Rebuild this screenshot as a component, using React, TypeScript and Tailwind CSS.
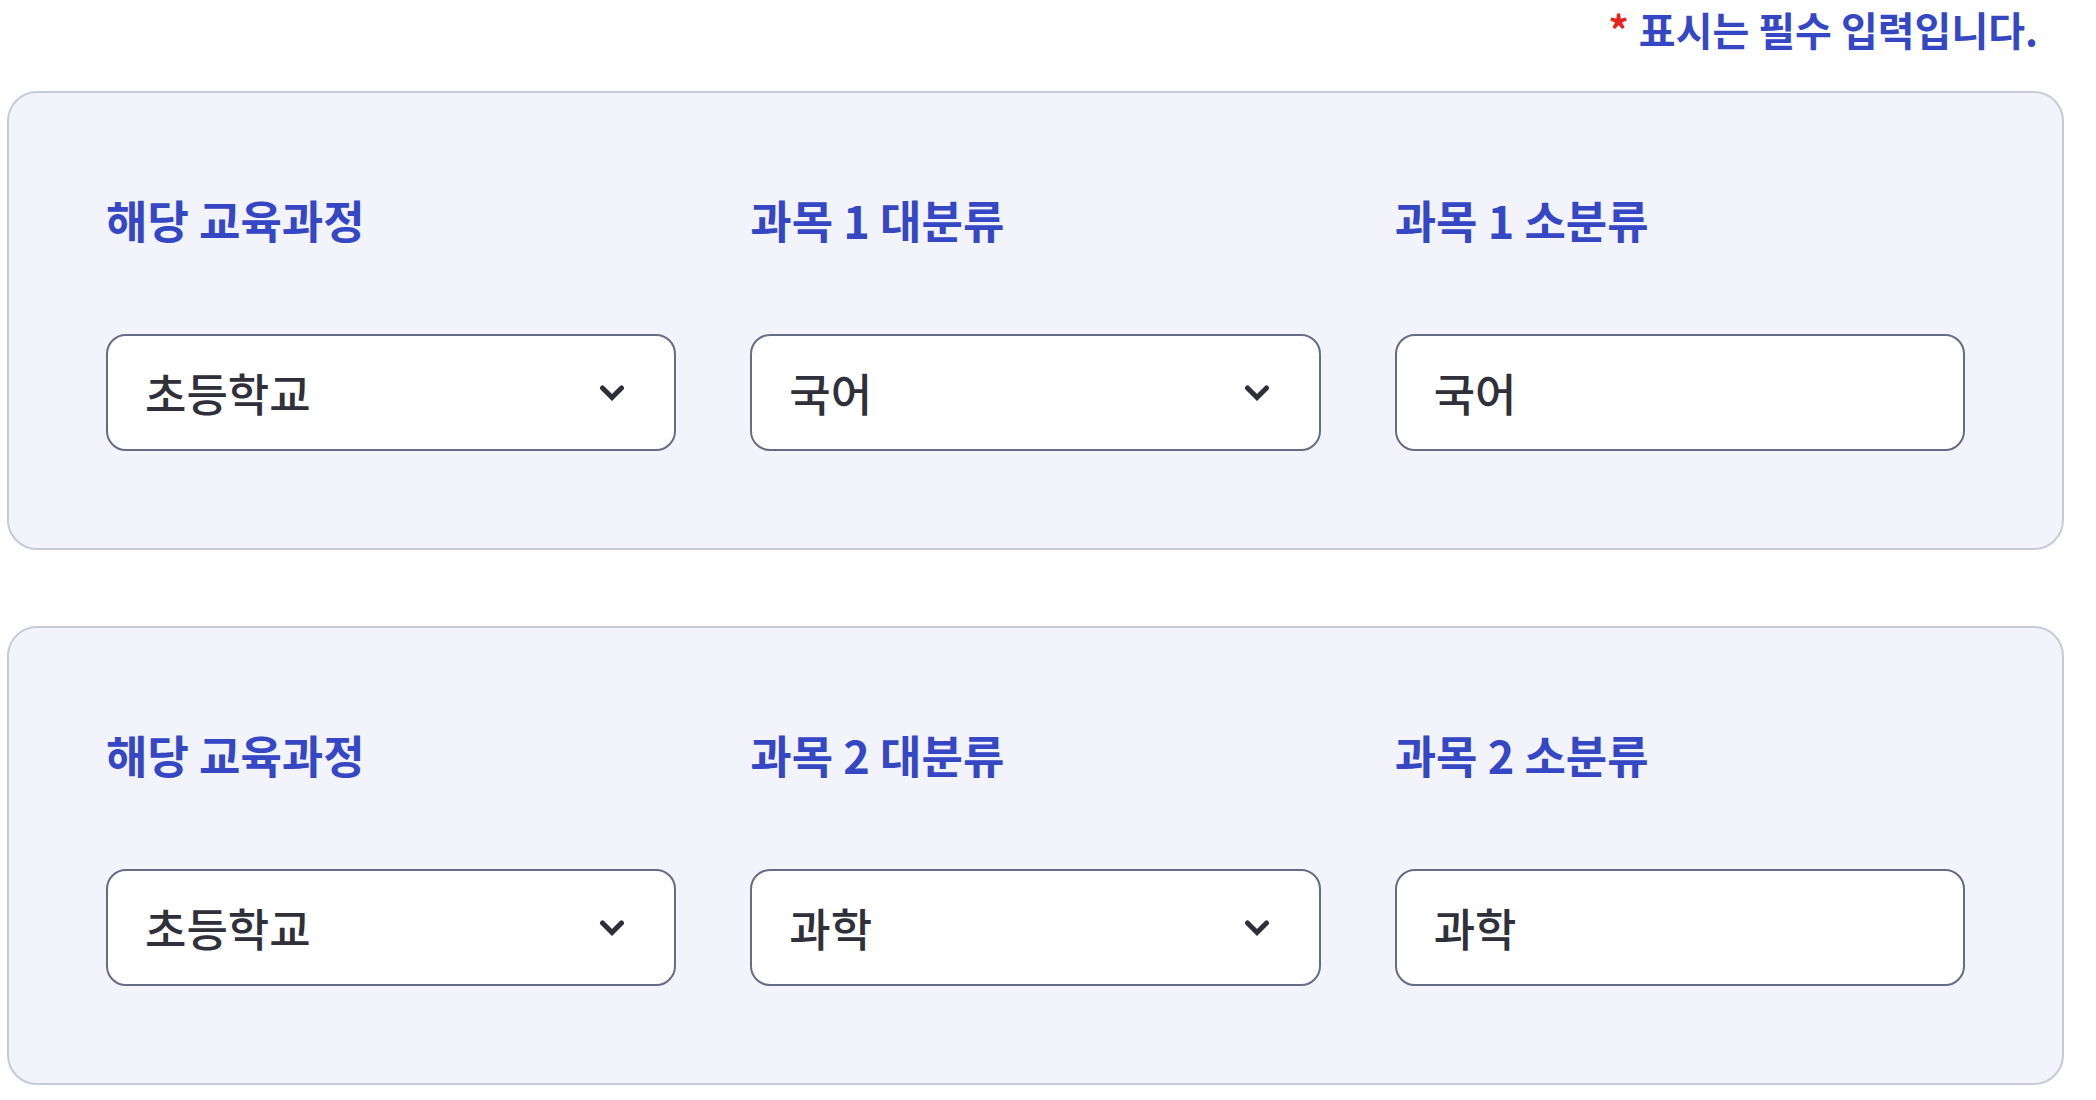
type Row = {
  course: string;
  major: string;
  minor: string;
  majorValue: string;
  minorValue: string;
};

const rows: Row[] = [
  {
    course: "초등학교",
    major: "과목 1 대분류",
    minor: "과목 1 소분류",
    majorValue: "국어",
    minorValue: "국어",
  },
  {
    course: "초등학교",
    major: "과목 2 대분류",
    minor: "과목 2 소분류",
    majorValue: "과학",
    minorValue: "과학",
  },
];

const font = { fontFamily: '"Noto Sans CJK KR", "Noto Sans", sans-serif' };

function Label({ children }: { children: React.ReactNode }) {
  return (
    <p className="text-[45px] leading-[60px] font-bold text-[#3547c4] mb-[84px]">
      {children}
    </p>
  );
}

function Chevron() {
  return (
    <svg width="26" height="18" viewBox="0 0 26 18" fill="none">
      <polyline
        points="3.5,4 13,13.5 22.5,4"
        stroke="#2f2f3a"
        strokeWidth="5"
        strokeLinecap="round"
        strokeLinejoin="miter"
      />
    </svg>
  );
}

function SelectBox({ value }: { value: string }) {
  return (
    <div
      role="combobox"
      className="h-[117px] bg-white border-2 border-[#676b86] rounded-[20px] flex items-center justify-between pl-[37px] pr-[49px]"
    >
      <span className="text-[45px] font-medium text-[#30303a]">{value}</span>
      <Chevron />
    </div>
  );
}

function TextBox({ value }: { value: string }) {
  return (
    <input
      readOnly
      value={value}
      style={font}
      className="w-full h-[117px] bg-white border-2 border-[#676b86] rounded-[20px] px-[37px] text-[45px] font-medium text-[#30303a] outline-none"
    />
  );
}

export default function App() {
  return (
    <div style={font} className="w-[2096px] h-[1100px] bg-white pl-[7px] pr-[32px]">
      {/* Required notice */}
      <div className="h-[91px] flex justify-end items-start pt-[1px] pr-[26px]">
        <p className="text-[40px] leading-[56px] font-bold text-[#3547c4]">
          <span className="text-[#e5221c] mr-[10px]">*</span>
          표시는 필수 입력입니다.
        </p>
      </div>

      <div className="flex flex-col gap-[76px]">
        {rows.map((row, i) => (
          <div
            key={i}
            className="bg-[#f2f3fb] border-2 border-[#c7c9dd] rounded-[30px] px-[97px] pt-[97px] pb-[97px] grid grid-cols-3 gap-x-[74px]"
          >
            <div>
              <Label>해당 교육과정</Label>
              <SelectBox value={row.course} />
            </div>
            <div>
              <Label>{row.major}</Label>
              <SelectBox value={row.majorValue} />
            </div>
            <div>
              <Label>{row.minor}</Label>
              <TextBox value={row.minorValue} />
            </div>
          </div>
        ))}
      </div>
    </div>
  );
}
